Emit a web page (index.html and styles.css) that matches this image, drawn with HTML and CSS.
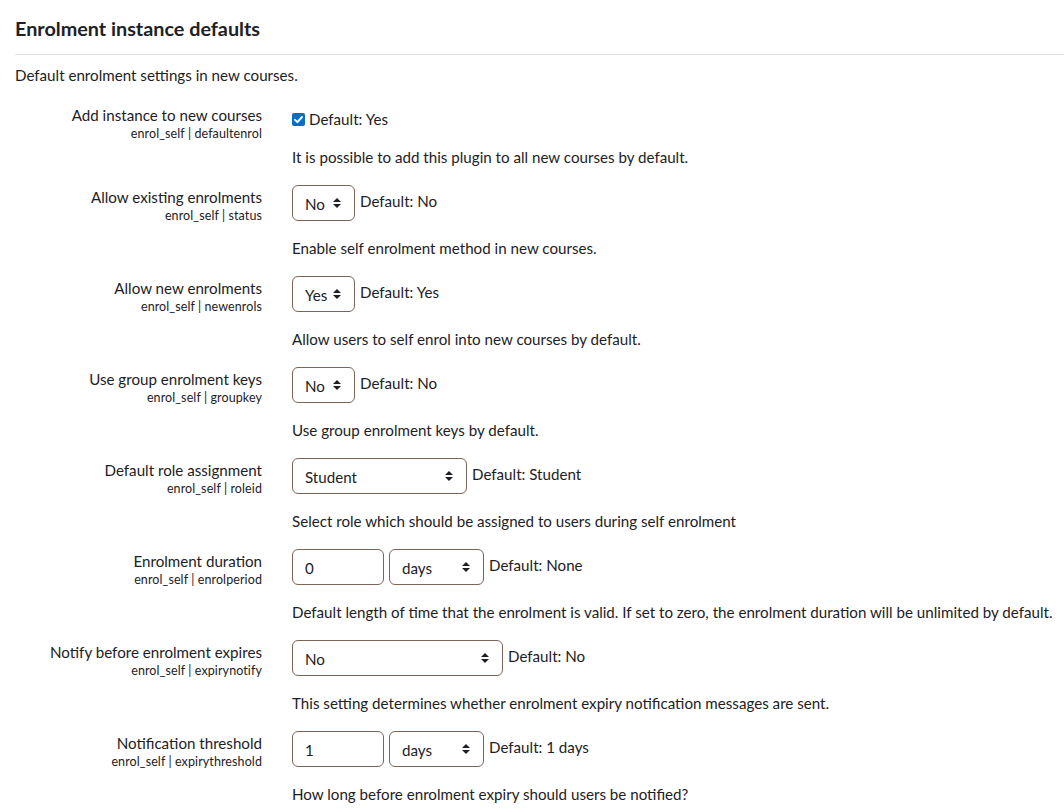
FILE: index.html
```html
<!DOCTYPE html>
<html>
<head>
<meta charset="utf-8">
<link rel="stylesheet" href="styles.css">
</head>
<body>
<div class="page">
  <h3 class="heading">Enrolment instance defaults</h3>
  <div class="rule"></div>
  <p class="intro">Default enrolment settings in new courses.</p>

  <div class="row row-check">
    <div class="label"><div class="name">Add instance to new courses</div><div class="code">enrol_self | defaultenrol</div></div>
    <div class="ctrl">
      <div class="line check-line"><span class="checkbox"><svg width="13" height="13" viewBox="0 0 13 13"><rect width="13" height="13" rx="2" fill="#0f6cbf"/><path d="M3 6.8 L5.4 9.2 L10 4" fill="none" stroke="#fff" stroke-width="1.9" stroke-linecap="round" stroke-linejoin="round"/></svg></span><span class="def">Default: Yes</span></div>
      <div class="desc desc-check">It is possible to add this plugin to all new courses by default.</div>
    </div>
  </div>

  <div class="row">
    <div class="label"><div class="name">Allow existing enrolments</div><div class="code">enrol_self | status</div></div>
    <div class="ctrl">
      <div class="line"><div class="select w63"><span>No</span><svg class="arr" width="8" height="10" viewBox="0 0 8 10"><path d="M0 4 L4 0 L8 4 Z M0 6 L4 10 L8 6 Z" fill="#1d2125"/></svg></div><span class="def">Default: No</span></div>
      <div class="desc">Enable self enrolment method in new courses.</div>
    </div>
  </div>

  <div class="row">
    <div class="label"><div class="name">Allow new enrolments</div><div class="code">enrol_self | newenrols</div></div>
    <div class="ctrl">
      <div class="line"><div class="select w63"><span>Yes</span><svg class="arr" width="8" height="10" viewBox="0 0 8 10"><path d="M0 4 L4 0 L8 4 Z M0 6 L4 10 L8 6 Z" fill="#1d2125"/></svg></div><span class="def">Default: Yes</span></div>
      <div class="desc">Allow users to self enrol into new courses by default.</div>
    </div>
  </div>

  <div class="row">
    <div class="label"><div class="name">Use group enrolment keys</div><div class="code">enrol_self | groupkey</div></div>
    <div class="ctrl">
      <div class="line"><div class="select w63"><span>No</span><svg class="arr" width="8" height="10" viewBox="0 0 8 10"><path d="M0 4 L4 0 L8 4 Z M0 6 L4 10 L8 6 Z" fill="#1d2125"/></svg></div><span class="def">Default: No</span></div>
      <div class="desc">Use group enrolment keys by default.</div>
    </div>
  </div>

  <div class="row">
    <div class="label"><div class="name">Default role assignment</div><div class="code">enrol_self | roleid</div></div>
    <div class="ctrl">
      <div class="line"><div class="select w175"><span>Student</span><svg class="arr" width="8" height="10" viewBox="0 0 8 10"><path d="M0 4 L4 0 L8 4 Z M0 6 L4 10 L8 6 Z" fill="#1d2125"/></svg></div><span class="def">Default: Student</span></div>
      <div class="desc">Select role which should be assigned to users during self enrolment</div>
    </div>
  </div>

  <div class="row">
    <div class="label"><div class="name">Enrolment duration</div><div class="code">enrol_self | enrolperiod</div></div>
    <div class="ctrl">
      <div class="line"><div class="input">0</div><div class="select w95"><span>days</span><svg class="arr" width="8" height="10" viewBox="0 0 8 10"><path d="M0 4 L4 0 L8 4 Z M0 6 L4 10 L8 6 Z" fill="#1d2125"/></svg></div><span class="def">Default: None</span></div>
      <div class="desc">Default length of time that the enrolment is valid. If set to zero, the enrolment duration will be unlimited by default.</div>
    </div>
  </div>

  <div class="row">
    <div class="label"><div class="name">Notify before enrolment expires</div><div class="code">enrol_self | expirynotify</div></div>
    <div class="ctrl">
      <div class="line"><div class="select w211"><span>No</span><svg class="arr" width="8" height="10" viewBox="0 0 8 10"><path d="M0 4 L4 0 L8 4 Z M0 6 L4 10 L8 6 Z" fill="#1d2125"/></svg></div><span class="def">Default: No</span></div>
      <div class="desc">This setting determines whether enrolment expiry notification messages are sent.</div>
    </div>
  </div>

  <div class="row">
    <div class="label"><div class="name">Notification threshold</div><div class="code">enrol_self | expirythreshold</div></div>
    <div class="ctrl">
      <div class="line"><div class="input">1</div><div class="select w95"><span>days</span><svg class="arr" width="8" height="10" viewBox="0 0 8 10"><path d="M0 4 L4 0 L8 4 Z M0 6 L4 10 L8 6 Z" fill="#1d2125"/></svg></div><span class="def">Default: 1 days</span></div>
      <div class="desc">How long before enrolment expiry should users be notified?</div>
    </div>
  </div>
</div>
</body>
</html>
```
FILE: styles.css
```css
html, body {
  margin: 0;
  padding: 0;
  background: #fff;
}
body {
  font-family: Lato, "Liberation Sans", sans-serif;
  font-size: 15.15px;
  color: #1d2125;
}
.page {
  width: 1064px;
  overflow: hidden;
}
.heading {
  margin: 0;
  padding: 15px 0 0 15px;
  font-size: 19.8px;
  line-height: 26px;
  font-weight: 700;
}
.rule {
  margin: 13px 0 0 15px;
  height: 1px;
  background: #dee2e6;
}
.intro {
  margin: 0;
  padding: 9px 0 0 15px;
  line-height: 22px;
}
.row {
  display: grid;
  grid-template-columns: 262px 1fr;
  column-gap: 30px;
  margin-top: 17px;
}
.row-check {
  margin-top: 17px;
}
.label {
  text-align: right;
}
.name {
  line-height: 22px;
  padding-top: 1px;
}
.code {
  font-size: 12.5px;
  letter-spacing: 0.1px;
  line-height: 16px;
  margin-top: 0;
}
.ctrl {
  display: flex;
  flex-direction: column;
}
.line {
  display: flex;
  align-items: flex-start;
  gap: 5px;
}
.check-line {
  padding-top: 5px;
  align-items: center;
  gap: 4px;
}
.checkbox {
  display: flex;
  width: 13px;
  height: 13px;
}
.def {
  line-height: 22px;
  padding-top: 5px;
}
.check-line .def {
  padding-top: 0;
}
.select, .input {
  box-sizing: border-box;
  height: 36px;
  border: 1px solid #7d6358;
  border-radius: 6px;
  display: flex;
  align-items: center;
  padding: 0 0 0 12px;
  line-height: 22px;
}
.select {
  justify-content: space-between;
  padding-right: 13px;
}
.select span {
  padding-top: 2px;
}
.input {
  width: 92px;
  padding-top: 2px;
}
.arr {
  flex: none;
}
.w63 { width: 63px; }
.w95 { width: 95px; }
.w175 { width: 175px; }
.w211 { width: 211px; }
.desc {
  margin-top: 16px;
  line-height: 22px;
}
.desc-check {
  margin-top: 16px;
}
```
